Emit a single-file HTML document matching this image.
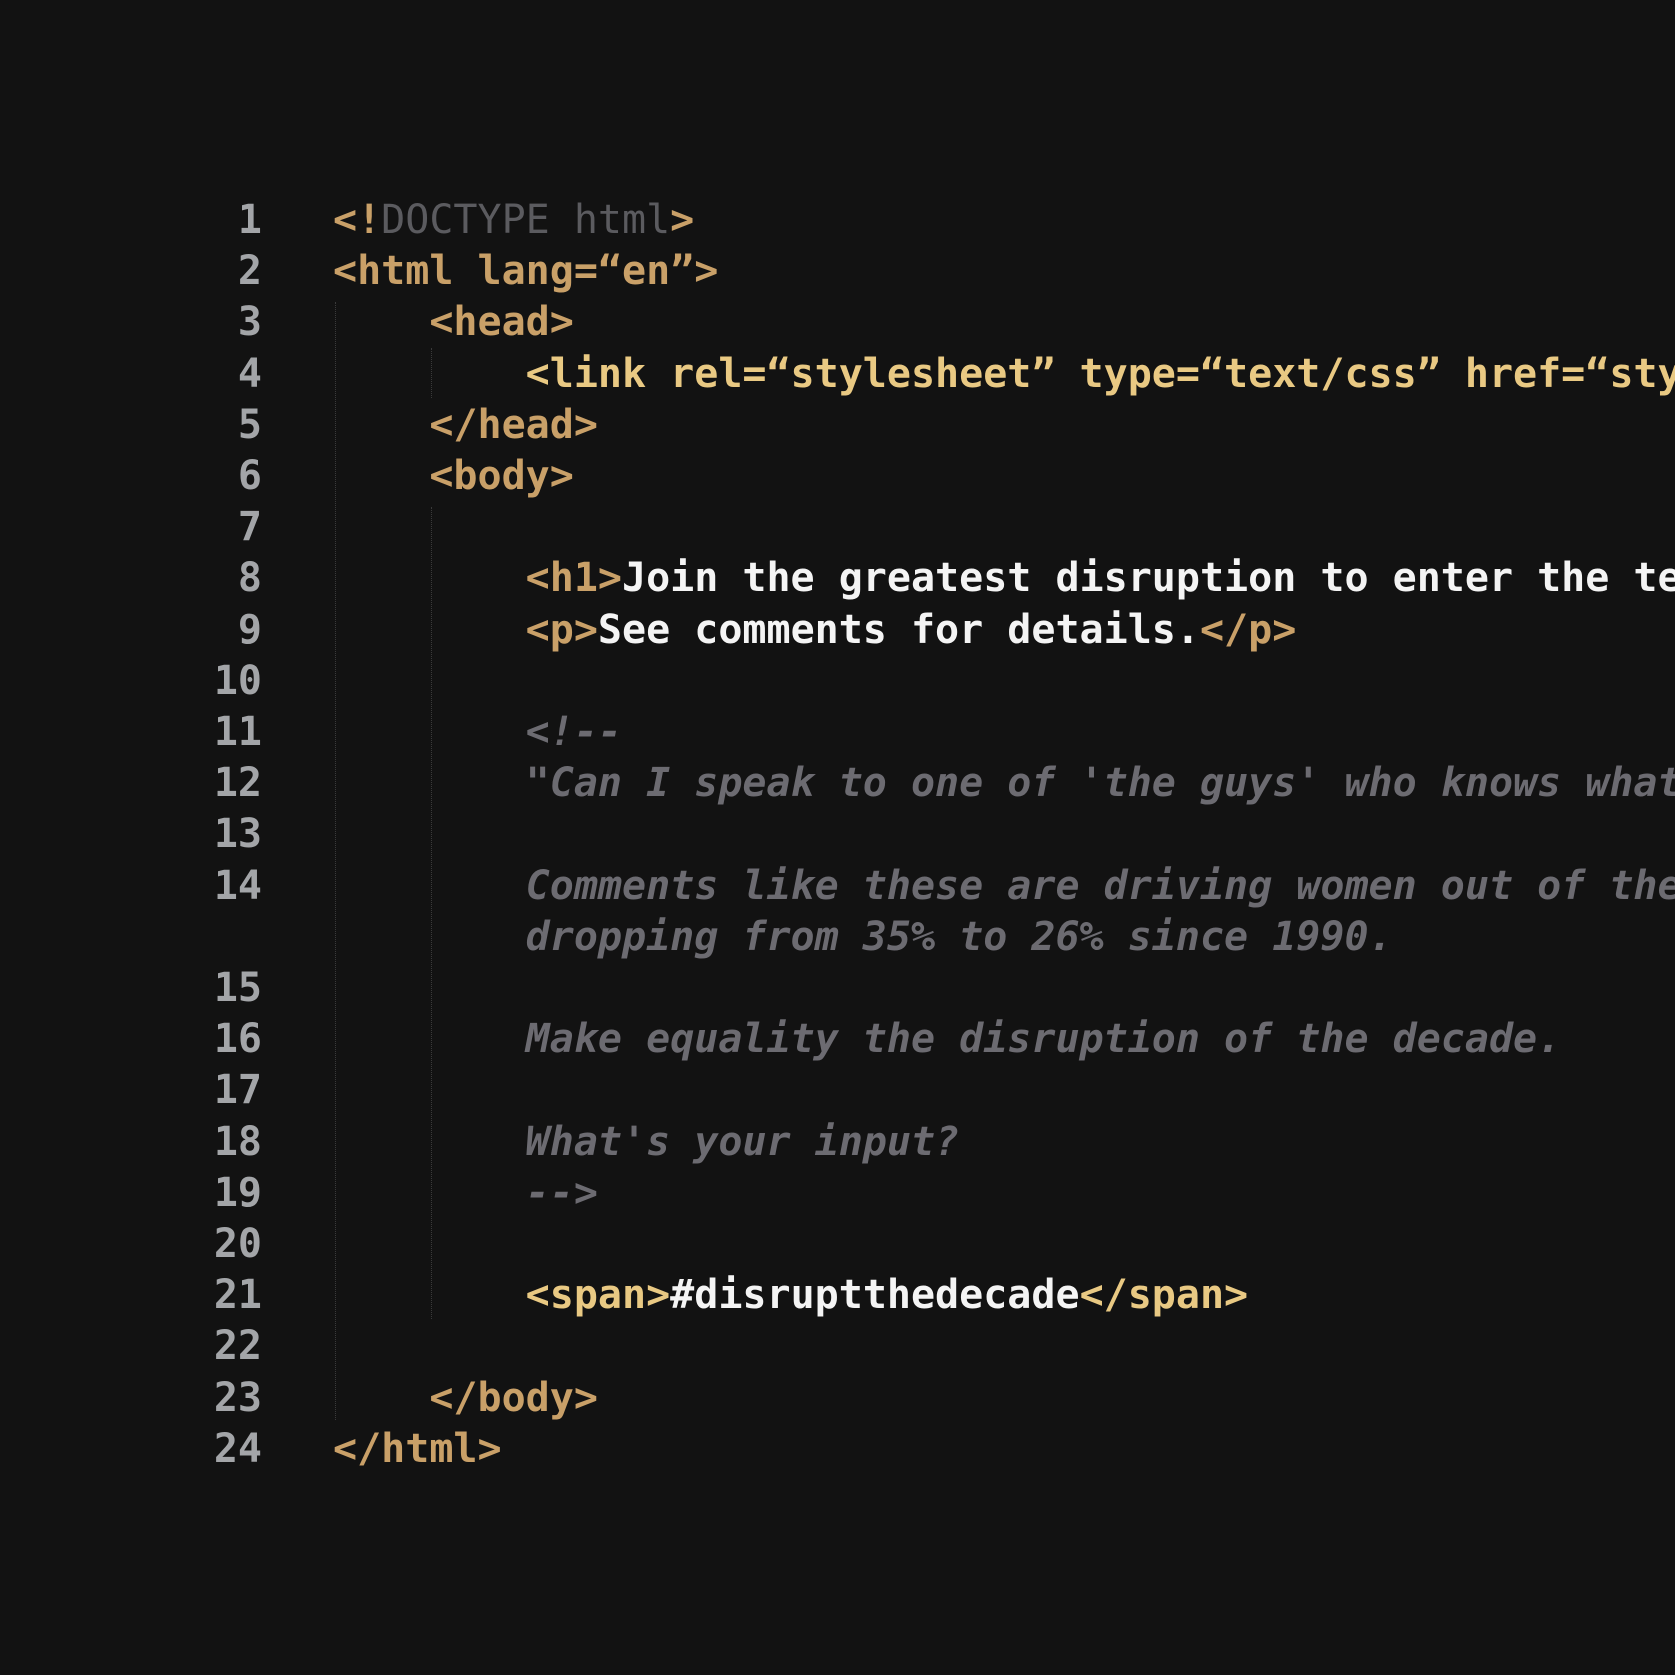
<!DOCTYPE html>
<html><head><style>
html,body{margin:0;padding:0;background:#121212;width:1675px;height:1675px;overflow:hidden}
.r{position:absolute;left:0;width:1675px;overflow:hidden;height:51.2px;line-height:51.2px;font-family:"DejaVu Sans Mono","Liberation Mono",monospace;font-size:40px;white-space:pre;font-weight:bold}
.n{position:absolute;right:1413px;color:#a3a5a8;text-align:right}
.c{position:absolute;left:333px;}
.t{color:#c9a068}
.l{color:#e9c983}
.w{color:#f4f4f4}
.g{color:#5b5b5f;font-weight:normal}
.m{color:#6c6b71;font-style:italic}
.gd{position:absolute;width:0;border-left:1px dotted #3a3a3a}
</style></head><body>
<div class="gd" style="left:335px;top:302px;height:1118px"></div>
<div class="gd" style="left:431px;top:348px;height:50px"></div>
<div class="gd" style="left:431px;top:507px;height:812px"></div>

<div class="r" style="top:195px"><span class="n">1</span><span class="c"><span class="t">&lt;!</span><span class="g">DOCTYPE html</span><span class="t">&gt;</span></span></div>
<div class="r" style="top:246.2px"><span class="n">2</span><span class="c t">&lt;html lang=“en”&gt;</span></div>
<div class="r" style="top:297.4px"><span class="n">3</span><span class="c t">    &lt;head&gt;</span></div>
<div class="r" style="top:348.6px"><span class="n">4</span><span class="c l">        &lt;link rel=“stylesheet” type=“text/css” href=“style.css”&gt;</span></div>
<div class="r" style="top:399.8px"><span class="n">5</span><span class="c t">    &lt;/head&gt;</span></div>
<div class="r" style="top:451px"><span class="n">6</span><span class="c t">    &lt;body&gt;</span></div>
<div class="r" style="top:502.2px"><span class="n">7</span></div>
<div class="r" style="top:553.4px"><span class="n">8</span><span class="c">        <span class="t">&lt;h1&gt;</span><span class="w">Join the greatest disruption to enter the tech industry</span></span></div>
<div class="r" style="top:604.6px"><span class="n">9</span><span class="c">        <span class="t">&lt;p&gt;</span><span class="w">See comments for details.</span><span class="t">&lt;/p&gt;</span></span></div>
<div class="r" style="top:655.8px"><span class="n">10</span></div>
<div class="r" style="top:707px"><span class="n">11</span><span class="c m">        &lt;!--</span></div>
<div class="r" style="top:758.2px"><span class="n">12</span><span class="c m">        "Can I speak to one of 'the guys' who knows what</span></div>
<div class="r" style="top:809.4px"><span class="n">13</span></div>
<div class="r" style="top:860.6px"><span class="n">14</span><span class="c m">        Comments like these are driving women out of the</span></div>
<div class="r" style="top:911.8px"><span class="c m">        dropping from 35% to 26% since 1990.</span></div>
<div class="r" style="top:963px"><span class="n">15</span></div>
<div class="r" style="top:1014.2px"><span class="n">16</span><span class="c m">        Make equality the disruption of the decade.</span></div>
<div class="r" style="top:1065.4px"><span class="n">17</span></div>
<div class="r" style="top:1116.6px"><span class="n">18</span><span class="c m">        What's your input?</span></div>
<div class="r" style="top:1167.8px"><span class="n">19</span><span class="c m">        --&gt;</span></div>
<div class="r" style="top:1219px"><span class="n">20</span></div>
<div class="r" style="top:1270.2px"><span class="n">21</span><span class="c">        <span class="l">&lt;span&gt;</span><span class="w">#disruptthedecade</span><span class="l">&lt;/span&gt;</span></span></div>
<div class="r" style="top:1321.4px"><span class="n">22</span></div>
<div class="r" style="top:1372.6px"><span class="n">23</span><span class="c t">    &lt;/body&gt;</span></div>
<div class="r" style="top:1423.8px"><span class="n">24</span><span class="c t">&lt;/html&gt;</span></div>
</body></html>
